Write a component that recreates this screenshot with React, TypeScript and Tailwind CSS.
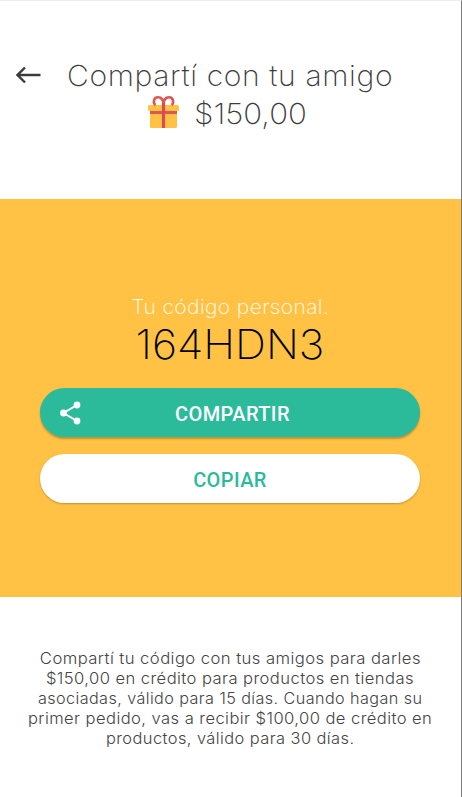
const body = [
  { text: "Compartí tu código con tus amigos para darles", cls: "scale-x-[1.074]" },
  { text: "$150,00 en crédito para productos en tiendas", cls: "scale-x-[1.07]" },
  { text: "asociadas, válido para 15 días. Cuando hagan su", cls: "scale-x-[1.044]" },
  { text: "primer pedido, vas a recibir $100,00 de crédito en", cls: "scale-x-[1.069]" },
  { text: "productos, válido para 30 días.", cls: "scale-x-[1.06]" },
];

function BackArrow() {
  return (
    <svg width="26" height="18" viewBox="0 0 26 18" fill="none" stroke="#3c3c3c" strokeWidth="2.4">
      <path d="M24.500 9H2M9 1.500L1.500 9l7.500 7.500" />
    </svg>
  );
}

function Gift() {
  return (
    <svg width="31" height="34" viewBox="0 0 31 34" fill="none">
      <path d="M2 14H29V31.500q0 1.500-1.500 1.500H3.500q-1.500 0-1.500-1.500Z" fill="#ffc245" />
      <rect x="0" y="10" width="31" height="6" rx="1.500" fill="#ffc245" />
      <path d="M7.500 10.200C5 8.500 5.200 2.200 10 2.200C13.500 2.200 15.500 5 15.500 10C15.500 5 17.500 2.200 21 2.200C25.800 2.200 26 8.500 23.500 10.200" stroke="#e25555" strokeWidth="2.600" />
      <path d="M2 17.500H29" stroke="#e25555" strokeWidth="3" />
      <path d="M15.500 8V33" stroke="#d94d52" strokeWidth="3.200" />
    </svg>
  );
}

function ShareIcon() {
  return (
    <svg width="22" height="24" viewBox="0 0 22 24" fill="#fff">
      <path d="M17 4L3.500 12l13.500 8" fill="none" stroke="#fff" strokeWidth="2" />
      <circle cx="17" cy="4" r="3.400" />
      <circle cx="3.500" cy="12" r="3.400" />
      <circle cx="17" cy="20" r="3.400" />
    </svg>
  );
}

export default function App() {
  return (
    <main className="flex h-[797px] w-[462px] flex-col overflow-hidden border-t border-r border-t-[#eeeeee] border-r-[#7b7b7b] bg-white font-['Inter',sans-serif] text-[#3c3c3c]">
      <header className="flex h-[198px] shrink-0 pt-[56px] pl-[16px]">
        <button aria-label="Volver" className="mt-[9px] h-[18px] w-[26px]">
          <BackArrow />
        </button>
        <h1 className="ml-[15px] flex w-[346px] flex-col items-center text-[29px] leading-[38px] font-extralight whitespace-nowrap">
          <span className="scale-x-[1.038] tracking-[0.6px]">Compartí con tu amigo</span>
          <span className="flex h-[38px] w-[164px] items-start">
            <Gift />
            <span className="ml-[15px] origin-left scale-x-[1.075]">$150,00</span>
          </span>
        </h1>
      </header>
      <section className="flex h-[398px] shrink-0 flex-col items-center bg-[#ffc245] pt-[94px] pr-px">
        <p className="h-[28px] scale-x-[1.048] text-[20px] leading-[28px] font-extralight tracking-[0.4px] text-white">Tu código personal.</p>
        <p className="h-[46px] scale-x-[1.05] text-[41px] leading-[46px] font-extralight text-black">164HDN3</p>
        <button className="mt-[21px] flex h-[49px] w-[380px] items-center rounded-full bg-[#2bbb9b] pt-px pl-[20px] font-['Roboto',sans-serif] text-[20px] font-medium text-white shadow-[0_2px_2px_rgba(0,0,0,0.25)]">
          <ShareIcon />
          <span className="flex-1 pt-[2px] pr-[37px] text-center tracking-[0.4px]">COMPARTIR</span>
        </button>
        <button className="mt-[17px] h-[49px] w-[380px] rounded-full bg-white pt-[3px] font-['Roboto',sans-serif] text-[20px] font-medium tracking-[0.4px] text-[#2bbb9b] shadow-[0_1px_2px_rgba(0,0,0,0.25)]">
          COPIAR
        </button>
      </section>
      <p className="flex flex-col items-center pt-[52px] pr-px text-[15.500px] leading-[20px] font-light whitespace-nowrap text-[#444444]">
        {body.map((line) => (
          <span key={line.text} className={`tracking-[0.4px] ${line.cls}`}>{line.text}</span>
        ))}
      </p>
    </main>
  );
}
